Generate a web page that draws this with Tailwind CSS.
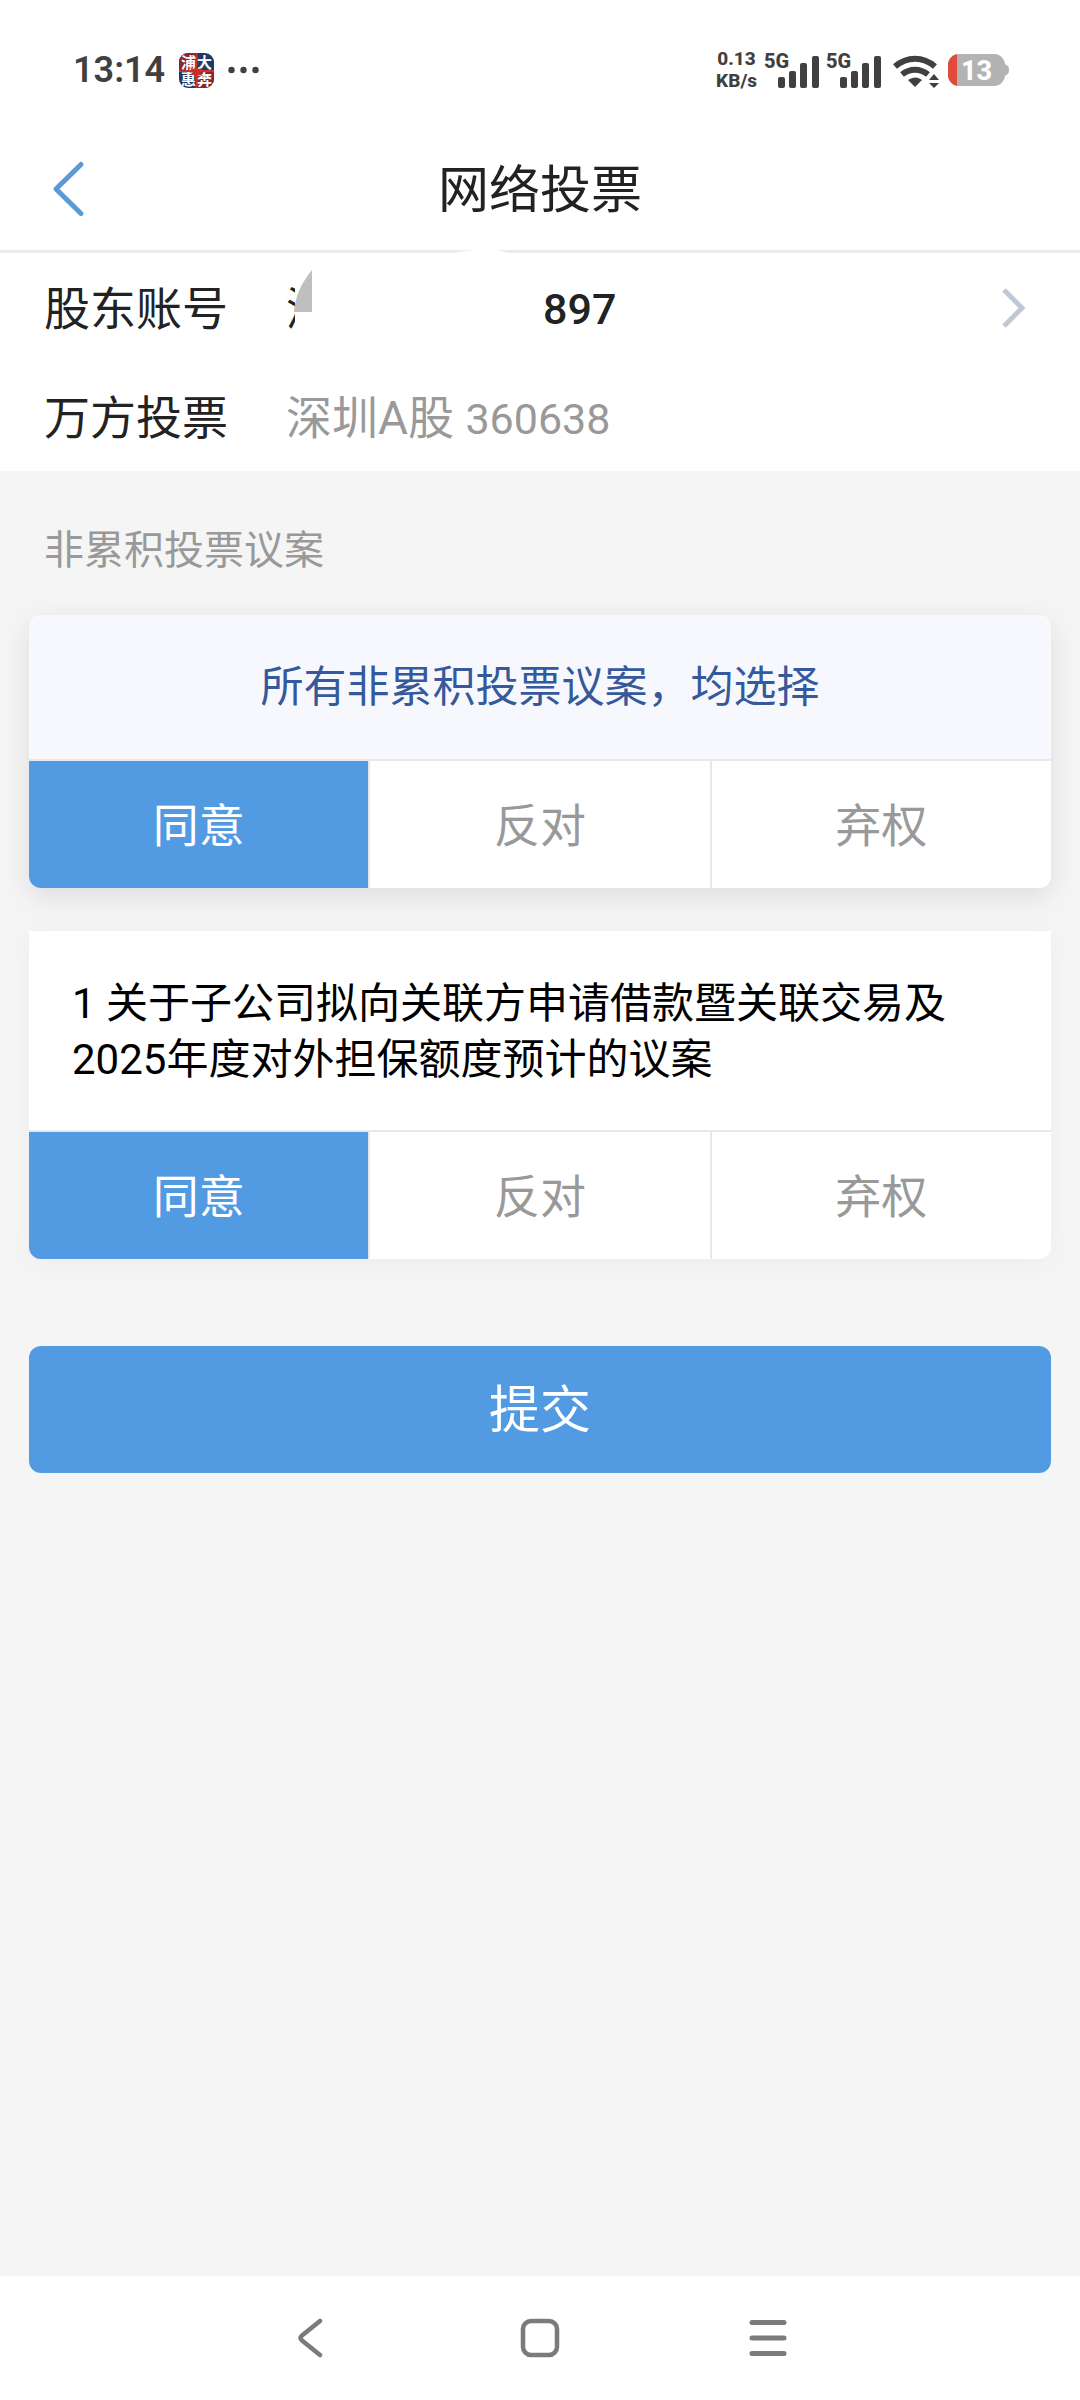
<!DOCTYPE html>
<html lang="zh-CN">
<head>
    <meta charset="UTF-8">
    <meta name="viewport" content="width=device-width, initial-scale=1.0">
    <title>网络投票</title>
    <script src="https://cdn.jsdelivr.net/npm/@tailwindcss/browser@4"></script>
</head>
<body class="min-h-screen flex flex-col bg-[#f5f5f5] text-[#222222] font-['Roboto','Noto_Sans_CJK_SC',sans-serif]">
    <!-- Status bar -->
    <div class="bg-white flex items-center justify-between pt-[50px] pb-[38px] pl-[73px] pr-[70px] h-32 text-[#404040]">
        <div class="flex items-center gap-[14px]">
            <span class="text-[36px] leading-10 font-semibold">13:14</span>
            <svg class="w-[35px] h-[35px]" viewBox="0 0 35 35" aria-hidden="true">
                <defs>
                    <clipPath id="appShape"><rect width="35" height="35" rx="9"/></clipPath>
                </defs>
                <g clip-path="url(#appShape)">
                    <rect width="35" height="35" fill="#1f3a66"/>
                    <rect width="18" height="18" fill="#8e2430"/>
                    <rect x="18" y="18" width="17" height="17" fill="#8e2430"/>
                    <path d="M17.500 0V35M0 18H35" stroke="#c0342c" stroke-width="2"/>
                </g>
                <g fill="#fff" font-size="15" font-weight="700" font-family="Noto Sans CJK SC, sans-serif">
                    <text x="2" y="15">浦</text>
                    <text x="18" y="15">大</text>
                    <text x="2" y="32">惠</text>
                    <text x="18" y="32">奔</text>
                </g>
                <path d="M17 12l2 4 5-1-3 4 3 4-5-1-2 4-2-4-4 0 3-3-3-4 4 1z" fill="#c92f25"/>
            </svg>
            <svg class="w-[31px] h-2" viewBox="0 0 31 8" fill="#404040" aria-hidden="true">
                <circle cx="3.500" cy="4" r="3.200"/>
                <circle cx="15.500" cy="4" r="3.200"/>
                <circle cx="27.500" cy="4" r="3.200"/>
            </svg>
        </div>
        <div class="flex items-center gap-2">
            <div class="text-[19px] leading-[22px] font-extrabold text-center">0.13<br>KB/s</div>
            <svg class="w-[54px] h-9 overflow-visible" viewBox="0 0 54 36" fill="#404040" role="img" aria-label="5G">
                <text x="-1" y="16" font-size="20" font-weight="800">5G</text>
                <rect x="13" y="25" width="7" height="11" rx="2"/>
                <rect x="24" y="19" width="7" height="17" rx="2"/>
                <rect x="35" y="11" width="7" height="25" rx="2"/>
                <rect x="47" y="4" width="7" height="32" rx="2"/>
            </svg>
            <svg class="w-[54px] h-9 overflow-visible" viewBox="0 0 54 36" fill="#404040" role="img" aria-label="5G">
                <text x="-1" y="16" font-size="20" font-weight="800">5G</text>
                <rect x="13" y="25" width="7" height="11" rx="2"/>
                <rect x="24" y="19" width="7" height="17" rx="2"/>
                <rect x="35" y="11" width="7" height="25" rx="2"/>
                <rect x="47" y="4" width="7" height="32" rx="2"/>
            </svg>
            <svg class="w-[50px] h-9" viewBox="0 0 50 36" fill="none" stroke="#404040" aria-hidden="true">
                <path d="M6 14.500C18 4 34 4 46 14.500" stroke-width="6"/>
                <path d="M13 22.500C21 16 31 16 39 22.500" stroke-width="6"/>
                <path d="M19 28C24 24.500 29 24.500 33 28L26 35Z" fill="#404040" stroke="none"/>
                <path d="M40 28L45 22L50 28ZM40 31L45 36L50 31Z" fill="#404040" stroke="none"/>
            </svg>
            <svg class="w-[63px] h-8" viewBox="0 0 63 32" aria-hidden="true">
                <defs>
                    <clipPath id="cell"><rect x="1" width="57" height="32" rx="11"/></clipPath>
                </defs>
                <g clip-path="url(#cell)">
                    <rect x="1" width="57" height="32" fill="#b3b3b3"/>
                    <rect width="10" height="32" fill="#e24b3b"/>
                </g>
                <path d="M57 10C61 11 62 13 62 16S61 21 57 22Z" fill="#b3b3b3"/>
                <text x="14" y="26" font-size="27" font-weight="800" fill="#fff">13</text>
            </svg>
        </div>
    </div>

    <!-- Title bar -->
    <header class="relative bg-white flex items-center h-[125px] px-12 border-b-[3px] border-[#ebebeb]">
        <button type="button" class="w-12 h-16 flex items-center" aria-label="返回">
            <svg class="w-10 h-[58px]" viewBox="0 0 40 58" fill="none" stroke="#5a9bd5" stroke-width="5" stroke-linecap="round" stroke-linejoin="round">
                <path d="M33 4.500L8 29L33 53.500"/>
            </svg>
        </button>
        <h1 class="flex-1 pt-1 text-center text-[51px] leading-[60px]">网络投票</h1>
        <div class="w-12"></div>
        <svg class="absolute left-[455px] -bottom-[3px] w-[52px] h-[3px]" viewBox="0 0 52 3" fill="#fff" aria-hidden="true">
            <path d="M0 3Q12 0 26 0H41Q48 1 52 3Z"/>
        </svg>
    </header>

    <!-- Account -->
    <section class="bg-white text-[46px]">
        <button type="button" class="w-full h-[109px] pt-1 pl-11 pr-[52px] flex items-center text-left">
            <span class="w-[242px]">股东账号</span>
            <span class="relative flex-1 h-20 flex items-center">
                <span class="w-[9px] overflow-hidden whitespace-nowrap">深</span>
                <svg class="absolute left-2 top-0 w-[18px] h-[42px]" viewBox="0 0 18 42" fill="#bfbfbf" aria-hidden="true">
                    <path d="M18 0C8 12 1 26 0 42H18Z"/>
                </svg>
                <span class="pl-[248px] text-[43px] font-medium">897</span>
            </span>
            <svg class="w-7 h-11 mb-1" viewBox="0 0 28 44" fill="none" stroke="#bfc9d5" stroke-width="5" aria-hidden="true">
                <path d="M4 4L22 22L4 40"/>
            </svg>
        </button>
        <div class="h-[109px] pt-1 pl-11 flex items-center">
            <span class="w-[242px]">万方投票</span>
            <span class="text-[#999999]">深圳A股 <span class="text-[43px]">360638</span></span>
        </div>
    </section>

    <main class="flex-1 px-[29px]">
        <h2 class="pt-[50px] pb-[34px] pl-[15px] text-[40px] leading-[60px] text-[#999999]">非累积投票议案</h2>

        <form id="voteForm">
            <!-- Vote on everything -->
            <fieldset class="rounded-xl overflow-hidden bg-white shadow-[0_8px_30px_rgba(0,0,0,0.1)]">
                <div id="allTitle" class="h-36 flex items-center justify-center bg-[#f6f8fe] text-[43px] text-[#36599b]">所有非累积投票议案，均选择</div>
                <div class="grid grid-cols-3 gap-[2px] bg-[#e8e8e8] border-t-2 border-[#e8e8e8] text-[46px] text-[#999999]" role="radiogroup" aria-labelledby="allTitle">
                    <label class="relative h-[127px] pt-1 flex items-center justify-center bg-white has-checked:bg-[#529be3] has-checked:text-white">
                        <input type="radio" name="all" value="agree" class="sr-only" checked>同意
                    </label>
                    <label class="relative h-[127px] pt-1 flex items-center justify-center bg-white has-checked:bg-[#529be3] has-checked:text-white">
                        <input type="radio" name="all" value="against" class="sr-only">反对
                    </label>
                    <label class="relative h-[127px] pt-1 flex items-center justify-center bg-white has-checked:bg-[#529be3] has-checked:text-white">
                        <input type="radio" name="all" value="abstain" class="sr-only">弃权
                    </label>
                </div>
            </fieldset>

            <!-- Proposal 1 -->
            <fieldset class="mt-[43px] rounded-b-xl overflow-hidden bg-white shadow-[0_4px_30px_rgba(0,0,0,0.04)]">
                <p id="item1Title" class="px-[43px] pt-[45px] pb-[42px] text-[42px] leading-14 text-black">1 关于子公司拟向关联方申请借款暨关联交易及2025年度对外担保额度预计的议案</p>
                <div class="grid grid-cols-3 gap-[2px] bg-[#e8e8e8] border-t-2 border-[#e8e8e8] text-[46px] text-[#999999]" role="radiogroup" aria-labelledby="item1Title">
                    <label class="relative h-[127px] pt-1 flex items-center justify-center bg-white has-checked:bg-[#529be3] has-checked:text-white">
                        <input type="radio" name="item1" value="agree" class="sr-only" checked>同意
                    </label>
                    <label class="relative h-[127px] pt-1 flex items-center justify-center bg-white has-checked:bg-[#529be3] has-checked:text-white">
                        <input type="radio" name="item1" value="against" class="sr-only">反对
                    </label>
                    <label class="relative h-[127px] pt-1 flex items-center justify-center bg-white has-checked:bg-[#529be3] has-checked:text-white">
                        <input type="radio" name="item1" value="abstain" class="sr-only">弃权
                    </label>
                </div>
            </fieldset>

            <button type="submit" class="mt-[87px] w-full h-[127px] pt-1 rounded-xl bg-[#529be3] text-white text-[51px]">提交</button>
        </form>
    </main>

    <!-- System navigation -->
    <nav class="bg-white h-[124px] flex items-center justify-center text-[#7b7b7b]">
        <button type="button" class="w-[228px] flex justify-center" aria-label="后退">
            <svg class="w-10 h-10" viewBox="0 0 40 40" fill="none" stroke="currentColor" stroke-width="4.500" stroke-linecap="round" stroke-linejoin="round">
                <path d="M28 3L10 17.500Q7 20 10 22.500L28 37"/>
            </svg>
        </button>
        <button type="button" class="w-[228px] flex justify-center" aria-label="主页">
            <svg class="w-10 h-10" viewBox="0 0 40 40" fill="none" stroke="currentColor" stroke-width="4.500">
                <rect x="3" y="3" width="34" height="34" rx="8"/>
            </svg>
        </button>
        <button type="button" class="w-[228px] flex justify-center" aria-label="菜单">
            <svg class="w-10 h-10" viewBox="0 0 40 40" fill="none" stroke="currentColor" stroke-width="5" stroke-linecap="round">
                <path d="M4 4.500H36M4 20H36M4 35.500H36"/>
            </svg>
        </button>
    </nav>

    <script>
        // choosing an option for all proposals applies it to each of them
        document.querySelectorAll('input[name="all"]').forEach(function(radio) {
            radio.addEventListener('change', function() {
                document.querySelector('input[name="item1"][value="' + this.value + '"]').checked = true;
            });
        });

        document.getElementById('voteForm').addEventListener('submit', function(e) {
            e.preventDefault();
        });
    </script>
</body>
</html>
